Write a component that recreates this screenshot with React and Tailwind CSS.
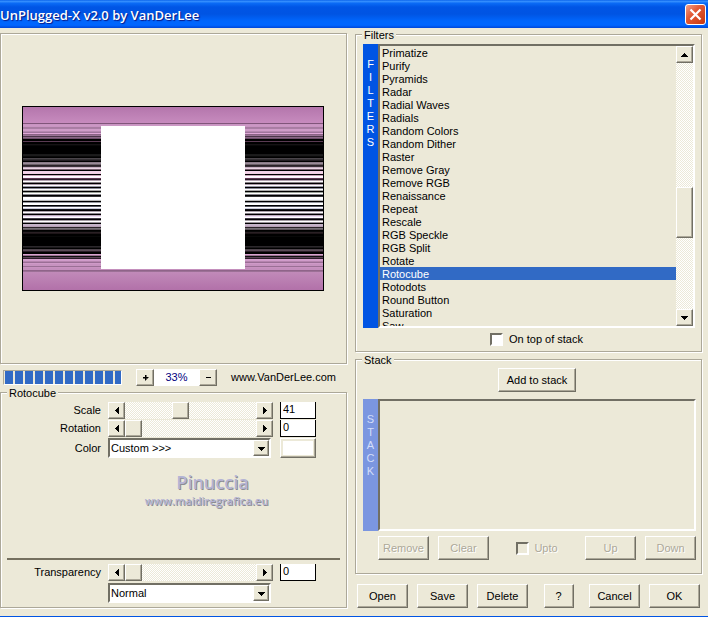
import React from "react";

const FACE =
  "border border-t-white border-l-white border-r-[#716f64] border-b-[#716f64] bg-[#ece9d8] shadow-[inset_-1px_-1px_0_#aca899]";
const SUNKEN =
  "border-2 border-t-[#716f64] border-l-[#716f64] border-r-white border-b-white";
const DITHER =
  "bg-[repeating-conic-gradient(#ffffff_0_25%,#ece9d8_0_50%)] bg-[length:2px_2px]";

const FILTERS = [
  "Primatize", "Purify", "Pyramids", "Radar", "Radial Waves", "Radials",
  "Random Colors", "Random Dither", "Raster", "Remove Gray", "Remove RGB",
  "Renaissance", "Repeat", "Rescale", "RGB Speckle", "RGB Split", "Rotate",
  "Rotocube", "Rotodots", "Round Button", "Saturation", "Saw",
];

// Colour of each pixel row of the preview, starting at row 17 of the canvas.
const ROWS = (
  "80557a c994c2 cb98c4 c994c2 a87ca2 aa7ea5 cf9dc8 cf9dc8 b588b0 9f759b e0a8d8 8a6484 9a7396 4a3548 8b6887 6a4d67 " +
  "000000 000000 5a3b52 000000 000000 161214 080808 000000 000000 000000 000000 000000 000000 000000 000000 1a1a1a " +
  "1c1c1c 0a0a0a 000000 4a454a 333033 221c22 000000 8a7a88 9a8c98 6b5f69 2a2228 3a3038 c8b0c4 e8d4e2 776070 000000 " +
  "f0d0e6 f5d5ea f0cde2 000000 c8a0b8 ffffff fff0ff 5d3850 2a1a28 b0a0b0 ffffff 888088 000000 aa99aa ffffff 9999aa " +
  "000000 888899 ffffff aaaaaa 000000 99a099 ffffff 888890 000000 333338 ffffff ffffff f4f8ff bbbbbb 000000 999aa0 " +
  "ffffff ffffff 000000 555560 ffffff ccccdd 101014 000000 aaa0aa ffffff 888088 000000 bbaabb f0e0f8 ffffff 443c48 " +
  "000000 a098a0 ffffff 999099 000000 c5b5c8 c5b0c8 b5a0b5 2a2228 777077 5e565c 000000 080808 2a2024 1d1518 000000 " +
  "000000 080808 000000 000000 000000 000000 000000 000000 000000 000000 000000 2b282b 1a181a 000000 4e444c 5a4a56 " +
  "2a1d28 000000 000000 d8a5cf 9a7090 111111 5a4055 2a1c28 d5a0cd d09cca b584ae 9a6e95 cf9ac8 c793c0 c793c0 9a6f95 " +
  "c892c0 c48fbd c48fbd 8f6489 9c7096"
).split(" ");

function Arrow({ dir }) {
  const points = {
    left: "7,1 7,8 3,4.5",
    right: "3,1 3,8 7,4.5",
    up: "0.5,7 8.5,7 4.5,3",
    down: "0.5,3 8.5,3 4.5,7",
  }[dir];
  return (
    <svg width="9" height="9" viewBox="0 0 9 9" aria-hidden="true" shapeRendering="crispEdges">
      <polygon points={points} fill="#000" />
    </svg>
  );
}

function Group({ title, className, children }) {
  return (
    <section className={"relative min-w-0 border border-[#aca899] shadow-[inset_1px_1px_0_#fff,1px_1px_0_#fff] " + className}>
      {title && (
        <h2 className="absolute -top-[7px] left-[6px] bg-[#ece9d8] px-[2px] leading-[15px]">{title}</h2>
      )}
      {children}
    </section>
  );
}

function Btn({ children, width = "w-[51px]", disabled }) {
  return (
    <button
      type="button"
      disabled={disabled}
      className={"h-6 shrink-0 text-center disabled:text-[#aca899] disabled:[text-shadow:1px_1px_0_#fff] " + width + " " + FACE}
    >
      {children}
    </button>
  );
}

function Small({ label, children }) {
  return (
    <button type="button" aria-label={label} className={"flex size-[17px] shrink-0 items-center justify-center " + FACE}>
      {children}
    </button>
  );
}

function Slider({ id, label, value }) {
  return (
    <>
      <label htmlFor={id} className="text-right">{label}</label>
      <div className="flex h-[17px]">
        <Small label={label + " down"}><Arrow dir="left" /></Small>
        <input
          id={id}
          type="range"
          min="0"
          max="100"
          defaultValue={value}
          className={"h-[17px] min-w-0 flex-1 appearance-none [&::-webkit-slider-thumb]:size-[17px] [&::-webkit-slider-thumb]:appearance-none [&::-webkit-slider-thumb]:border [&::-webkit-slider-thumb]:border-t-white [&::-webkit-slider-thumb]:border-l-white [&::-webkit-slider-thumb]:border-r-[#716f64] [&::-webkit-slider-thumb]:border-b-[#716f64] [&::-webkit-slider-thumb]:bg-[#ece9d8] [&::-webkit-slider-thumb]:shadow-[inset_-1px_-1px_0_#aca899] " + DITHER}
        />
        <Small label={label + " up"}><Arrow dir="right" /></Small>
      </div>
      <input
        type="text"
        aria-label={label + " value"}
        defaultValue={value}
        className="h-[17px] w-full min-w-0 border border-t-0 border-black bg-white px-[2px] pb-[2px]"
      />
    </>
  );
}

function Drop({ id, label, options }) {
  return (
    <div className={"mr-[2px] flex h-5 bg-white " + SUNKEN}>
      <select id={id} aria-label={label} className="min-w-0 flex-1 appearance-none bg-white pl-px">
        {options.map((o) => <option key={o}>{o}</option>)}
      </select>
      <span className={"pointer-events-none flex w-4 items-center justify-center " + FACE}><Arrow dir="down" /></span>
    </div>
  );
}

function Strip({ text, className }) {
  return (
    <div className={"flex w-[15px] shrink-0 flex-col items-center pt-[14px] leading-[13px] " + className}>
      {text.split("").map((c, i) => <span key={i}>{c}</span>)}
    </div>
  );
}

function Preview() {
  return (
    <svg width="302" height="185" viewBox="0 0 302 185" shapeRendering="crispEdges" role="img" aria-label="Preview">
      <defs>
        <linearGradient id="top" x1="0" y1="0" x2="0" y2="1">
          <stop offset="0" stopColor="#b476ac" /><stop offset="1" stopColor="#c78bbe" />
        </linearGradient>
        <linearGradient id="bottom" x1="0" y1="0" x2="0" y2="1">
          <stop offset="0" stopColor="#c18ab9" /><stop offset="1" stopColor="#b271a9" />
        </linearGradient>
      </defs>
      <rect width="302" height="185" fill="#000" />
      <rect x="1" y="1" width="300" height="16" fill="url(#top)" />
      {ROWS.map((c, i) => <rect key={i} x="1" y={17 + i} width="300" height="1" fill={"#" + c} />)}
      <rect x="1" y={17 + ROWS.length} width="300" height={184 - 17 - ROWS.length} fill="url(#bottom)" />
      <rect x="79" y="20" width="144" height="143" fill="#fff" />
    </svg>
  );
}

const GRID = "grid grid-cols-[100px_1fr_36px] items-center gap-x-[7px] pr-[30px]";

export default function App() {
  return (
    <main className="bg-[#ece9d8] font-['Liberation_Sans',sans-serif] text-[11px] leading-[15px] text-black">
      <header className="flex h-7 items-center justify-between overflow-hidden bg-[linear-gradient(#0058e6_0%,#3a93ff_4%,#0a6af5_12%,#0055e5_25%,#0054e3_50%,#0066fc_75%,#0066ff_90%,#0046d8_100%)] pt-px pr-[2px]">
        <h1 className="font-['Open_Sans',sans-serif] text-[13px] leading-5 font-semibold whitespace-nowrap text-white [text-shadow:1px_1px_1px_#0a1883]">
          UnPlugged-X v2.0 by VanDerLee
        </h1>
        <button type="button" aria-label="Close" className="flex size-[21px] items-center justify-center rounded-[3px] border border-white bg-[linear-gradient(135deg,#f0a08a,#e25a36_40%,#c8380f)]">
          <svg width="13" height="13" viewBox="0 0 13 13" stroke="#fff" strokeWidth="2.2" aria-hidden="true">
            <path d="M1.5 1.5 L11.5 11.5 M11.5 1.5 L1.5 11.5" />
          </svg>
        </button>
      </header>

      <div className="grid grid-cols-2 gap-2 pt-[5px] pr-[6px] pb-[8px]">
        <div className="flex flex-col">
          <Group className="flex h-[331px] items-center justify-center pr-px"><Preview /></Group>

          <div className="mt-[5px] flex h-[17px] items-center pl-[3px]">
            <div role="progressbar" aria-label="Rendering" className="flex h-[15px] w-[119px] shrink-0 gap-[2px] overflow-hidden border border-t-[#aca899] border-l-[#aca899] border-r-white border-b-white px-px">
              {Array.from({ length: 12 }, (_, i) => <span key={i} className="h-[13px] w-2 shrink-0 bg-[#316ac5]" />)}
            </div>
            <div className="ml-[14px] flex h-[17px] shrink-0">
              <button type="button" aria-label="Zoom in" className={"flex w-[18px] items-center justify-center " + FACE}>
                <svg width="7" height="7" aria-hidden="true" shapeRendering="crispEdges"><path d="M3 1h1v2h2v1H4v2H3V4H1V3h2z" stroke="#000" strokeWidth="0.5" /></svg>
              </button>
              <output className="flex w-[45px] items-center justify-center bg-white text-[#000080]">33%</output>
              <button type="button" aria-label="Zoom out" className={"flex w-[18px] items-center justify-center " + FACE}>
                <svg width="7" height="7" aria-hidden="true" shapeRendering="crispEdges"><path d="M1 3h5v1H1z" /></svg>
              </button>
            </div>
            <a href="#vanderlee" className="ml-[14px] whitespace-nowrap">www.VanDerLee.com</a>
          </div>

          <Group title="Rotocube" className="mt-[6px] flex h-[216px] flex-col">
            <div className={"pt-[9px] " + GRID + " gap-y-px"}>
              <Slider id="scale" label="Scale" value={41} />
              <Slider id="rotation" label="Rotation" value={0} />
              <label htmlFor="color" className="text-right">Color</label>
              <Drop id="color" label="Color" options={["Custom >>>"]} />
              <button type="button" aria-label="Pick color" className="h-5 border border-t-white border-l-white border-r-[#716f64] border-b-[#716f64] bg-white shadow-[inset_-1px_-1px_0_#aca899,inset_0_0_0_2px_#ece9d8]" />
            </div>
            <div className="flex flex-1 flex-col items-center pt-[12px] pl-[66px] font-['Open_Sans',sans-serif] font-semibold text-[#b4b4d4] [text-shadow:1px_1px_0_#8c8c94]">
              <span className="pl-3 text-[18px] leading-6">Pinuccia</span>
              <span className="text-[11px] leading-[14px]">www.maidiregrafica.eu</span>
            </div>
            <hr className="mx-[6px] h-[2px] border-0 bg-[#75705f]" />
            <div className={"pt-[4px] pb-[4px] " + GRID + " gap-y-[2px]"}>
              <Slider id="transparency" label="Transparency" value={0} />
              <span />
              <Drop id="blend" label="Blend mode" options={["Normal"]} />
            </div>
          </Group>
        </div>

        <div className="flex flex-col pt-px">
          <Group title="Filters" className="flex h-[318px] flex-col pt-[9px] pr-[6px] pl-[7px]">
            <div className="flex h-[284px]">
              <Strip text="FILTERS" className="bg-[#0054e3] text-white" />
              <div className={"flex min-w-0 flex-1 " + SUNKEN}>
                <ul role="listbox" aria-label="Filters" className="flex-1 overflow-hidden">
                  {FILTERS.map((f) => (
                    <li key={f} role="option" aria-selected={f === "Rotocube"} className="h-[13px] pl-[2px] aria-selected:bg-[#316ac5] aria-selected:text-white">
                      {f}
                    </li>
                  ))}
                </ul>
                <div className={"flex w-[17px] flex-col " + DITHER}>
                  <Small label="Scroll up"><Arrow dir="up" /></Small>
                  <div className="flex-1 pt-[124px]"><div className={"h-[51px] " + FACE} /></div>
                  <Small label="Scroll down"><Arrow dir="down" /></Small>
                </div>
              </div>
            </div>
            <label className="flex flex-1 items-center justify-center gap-[6px] pl-[15px]">
              <input type="checkbox" className={"size-[13px] appearance-none bg-white " + SUNKEN} />
              On top of stack
            </label>
          </Group>

          <Group title="Stack" className="mt-[7px] flex h-[215px] flex-col pt-[8px] pr-[5px] pl-[7px]">
            <div className="flex justify-center pl-[15px]"><Btn width="w-[78px]">Add to stack</Btn></div>
            <div className="mt-[7px] flex h-[132px]">
              <Strip text="STACK" className="bg-[#7b96e0] text-[#d3defa]" />
              <ul role="listbox" aria-label="Stack" className={"flex-1 " + SUNKEN} />
            </div>
            <div className="mt-[5px] flex items-center justify-between pl-[15px]">
              <div className="flex gap-[9px]">
                <Btn disabled>Remove</Btn>
                <Btn disabled>Clear</Btn>
              </div>
              <label className="flex items-center gap-[5px] text-[#aca899] [text-shadow:1px_1px_0_#fff]">
                <input type="checkbox" disabled className={"size-[13px] appearance-none " + SUNKEN} />
                Upto
              </label>
              <div className="flex gap-[9px]">
                <Btn disabled>Up</Btn>
                <Btn disabled>Down</Btn>
              </div>
            </div>
          </Group>

          <div className="mt-[10px] flex justify-between px-[2px]">
            <div className="flex gap-[9px]">
              <Btn>Open</Btn>
              <Btn>Save</Btn>
              <Btn>Delete</Btn>
            </div>
            <Btn width="w-[30px]">?</Btn>
            <div className="flex gap-[9px]">
              <Btn>Cancel</Btn>
              <Btn>OK</Btn>
            </div>
          </div>
        </div>
      </div>
      <div className="h-px bg-[#0054e3]" />
    </main>
  );
}
